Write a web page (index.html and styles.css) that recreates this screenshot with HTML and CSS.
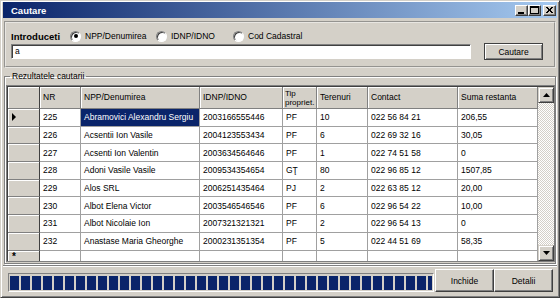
FILE: index.html
```html
<!DOCTYPE html>
<html lang="ro">
<head>
  <meta charset="UTF-8">
  <title>Cautare</title>
  <link rel="stylesheet" href="styles.css">
</head>
<body>
  <div class="window">
    <div class="titlebar">
      <span class="title">Cautare</span>
      <div class="caption-btns">
        <span class="cap-btn"><svg width="11" height="9" viewBox="0 0 11 9"><rect x="2" y="6" width="6" height="2" fill="#000"/></svg></span>
        <span class="cap-btn"><svg width="11" height="9" viewBox="0 0 11 9"><rect x="1.5" y="0.5" width="8" height="7" fill="none" stroke="#000"/><rect x="1" y="1" width="9" height="1" fill="#000"/></svg></span>
        <span class="cap-btn close"><svg width="11" height="9" viewBox="0 0 11 9"><path d="M2 1 L8 7 M3 1 L9 7 M8 1 L2 7 M9 1 L3 7" stroke="#000" stroke-width="1"/></svg></span>
      </div>
    </div>

    <div class="search-panel">
      <div class="search-options">
        <span class="search-label">Introduceti</span>
        <label class="radio radio-npp"><span class="radio-circle checked"></span>NPP/Denumirea</label>
        <label class="radio radio-idnp"><span class="radio-circle"></span>IDNP/IDNO</label>
        <label class="radio"><span class="radio-circle"></span>Cod Cadastral</label>
      </div>
      <div class="search-row">
        <div class="search-input">a</div>
        <button class="btn btn-default">Cautare</button>
      </div>
    </div>

    <fieldset class="results">
      <legend>Rezultatele cautarii</legend>
      <div class="grid">
        <div class="grid-body">
          <table class="data">
            <thead>
              <tr>
                <th class="rowhead c-rh"></th>
                <th class="c-nr">NR</th>
                <th class="c-name">NPP/Denumirea</th>
                <th class="c-idnp">IDNP/IDNO</th>
                <th class="c-tip">Tip<br>propriet.</th>
                <th class="c-ter">Terenuri</th>
                <th class="c-contact">Contact</th>
                <th class="c-suma">Suma restanta</th>
              </tr>
            </thead>
            <tbody>
              <tr>
                <td class="rowhead"><svg width="5" height="8" viewBox="0 0 5 8"><path d="M0 0 L4 4 L0 8 Z" fill="#000"/></svg></td>
                <td>225</td><td class="selected">Abramovici Alexandru Sergiu</td><td>2003166555446</td><td>PF</td><td>10</td><td>022 56 84 21</td><td>206,55</td>
              </tr>
              <tr>
                <td class="rowhead"></td>
                <td>226</td><td>Acsentii Ion Vasile</td><td>2004123553434</td><td>PF</td><td>6</td><td>022 69 32 16</td><td>30,05</td>
              </tr>
              <tr>
                <td class="rowhead"></td>
                <td>227</td><td>Acsenti Ion Valentin</td><td>2003634564646</td><td>PF</td><td>1</td><td>022 74 51 58</td><td>0</td>
              </tr>
              <tr>
                <td class="rowhead"></td>
                <td>228</td><td>Adoni Vasile Vasile</td><td>2009534354654</td><td>GŢ</td><td>80</td><td>022 96 85 12</td><td>1507,85</td>
              </tr>
              <tr>
                <td class="rowhead"></td>
                <td>229</td><td>Alos SRL</td><td>2006251435464</td><td>PJ</td><td>2</td><td>022 63 85 12</td><td>20,00</td>
              </tr>
              <tr>
                <td class="rowhead"></td>
                <td>230</td><td>Albot Elena Victor</td><td>2003546546546</td><td>PF</td><td>6</td><td>022 96 54 22</td><td>10,00</td>
              </tr>
              <tr>
                <td class="rowhead"></td>
                <td>231</td><td>Albot Nicolaie Ion</td><td>2007321321321</td><td>PF</td><td>2</td><td>022 96 54 13</td><td>0</td>
              </tr>
              <tr>
                <td class="rowhead"></td>
                <td>232</td><td>Anastase Maria Gheorghe</td><td>2000231351354</td><td>PF</td><td>5</td><td>022 44 51 69</td><td>58,35</td>
              </tr>
              <tr class="new-row">
                <td class="rowhead">*</td>
                <td></td><td></td><td></td><td></td><td></td><td></td><td></td>
              </tr>
            </tbody>
          </table>
        </div>
        <div class="scrollbar">
          <span class="scroll-btn"><svg width="7" height="4" viewBox="0 0 7 4"><path d="M3.5 0 L7 4 L0 4 Z" fill="#000"/></svg></span>
          <span class="scroll-track"></span>
          <span class="scroll-btn"><svg width="7" height="4" viewBox="0 0 7 4"><path d="M0 0 L7 0 L3.5 4 Z" fill="#000"/></svg></span>
        </div>
      </div>
    </fieldset>

    <div class="statusbar">
      <div class="progress"><div class="progress-fill"></div></div>
      <button class="btn">Inchide</button>
      <button class="btn">Detalii</button>
    </div>
  </div>
</body>
</html>
```

FILE: styles.css
```css
body {
  margin: 0;
  font-family: "Liberation Sans", Arial, sans-serif;
  font-size: 8.5px;
  color: #000;
  background-color: #d4d0c8;
}
.window {
  width: 560px;
  height: 298px;
  box-sizing: border-box;
  background-color: #d4d0c8;
  border: 1px solid;
  border-color: #d4d0c8 #404040 #404040 #d4d0c8;
  box-shadow: inset 1px 1px 0 #fff, inset -1px -1px 0 #808080;
  padding: 1px 2px 2px 2px;
  display: flex;
  flex-direction: column;
}
.titlebar {
  height: 16px;
  flex: none;
  display: flex;
  align-items: center;
  justify-content: space-between;
  padding: 0 1px 0 8px;
  background: linear-gradient(to right, #0a246a, #a6caf0);
  color: #fff;
}
.title {
  font-weight: bold;
  font-size: 9.5px;
}
.caption-btns {
  display: flex;
  align-items: center;
}
.cap-btn {
  width: 13px;
  height: 11px;
  box-sizing: border-box;
  display: flex;
  align-items: center;
  justify-content: center;
  background-color: #d4d0c8;
  border: 1px solid;
  border-color: #fff #404040 #404040 #fff;
  box-shadow: inset -1px -1px 0 #808080;
}
.cap-btn.close {
  margin-left: 2px;
}
.search-panel {
  flex: none;
  height: 47px;
  box-sizing: border-box;
  margin: 3px 1px 0 1px;
  border: 2px groove #e8e6e2;
  padding: 7px 8px 0 5px;
}
.search-options {
  display: flex;
  align-items: center;
  height: 12px;
}
.search-label {
  width: 59px;
  font-weight: bold;
  font-size: 9.5px;
}
.radio {
  display: flex;
  align-items: center;
  gap: 4px;
}
.radio-npp {
  width: 86px;
}
.radio-idnp {
  width: 77px;
}
.radio-circle {
  width: 11px;
  height: 11px;
  box-sizing: border-box;
  border-radius: 50%;
  background-color: #fff;
  border: 1px solid;
  border-color: #808080 #fff #fff #808080;
  box-shadow: inset 1px 1px 0 #404040;
  display: flex;
  align-items: center;
  justify-content: center;
}
.radio-circle.checked::after {
  content: "";
  width: 4px;
  height: 4px;
  border-radius: 50%;
  background-color: #000;
}
.search-row {
  display: flex;
  align-items: center;
  gap: 13px;
  margin-top: 1px;
  height: 17px;
}
.search-input {
  width: 460px;
  height: 15px;
  box-sizing: border-box;
  background-color: #fff;
  border: 1px solid;
  border-color: #808080 #fff #fff #808080;
  box-shadow: inset 1px 1px 0 #404040;
  padding: 0 3px;
  line-height: 13px;
}
.btn {
  font-family: "Liberation Sans", Arial, sans-serif;
  font-size: 8.5px;
  color: #000;
  background-color: #d4d0c8;
  border: 1px solid;
  border-color: #fff #404040 #404040 #fff;
  box-shadow: inset -1px -1px 0 #808080;
  padding: 0;
  width: 59px;
  height: 23px;
}
.btn-default {
  height: 17px;
  border: 1px solid #404040;
  box-shadow: inset 1px 1px 0 #fff, inset -1px -1px 0 #808080;
}
.results {
  flex: none;
  margin: 2px 1px 0 1px;
  padding: 3px 0 1px 1px;
  border: 1px solid #808080;
  box-shadow: inset 1px 1px 0 #fff, 1px 1px 0 #fff;
  min-inline-size: 0;
}
.results legend {
  padding: 0 2px;
  margin-left: 4px;
  line-height: 12px;
}
.grid {
  height: 177px;
  box-sizing: border-box;
  display: flex;
  border: 1px solid #808080;
  box-shadow: inset 1px 1px 0 #404040;
  padding: 1px 0 0 1px;
  overflow: hidden;
}
.grid-body {
  width: 530px;
  overflow: hidden;
  background-color: #fff;
}
.data {
  border-collapse: separate;
  border-spacing: 0;
  table-layout: fixed;
  width: 530px;
}
.data th,
.data td {
  box-sizing: border-box;
  padding: 0 0 0 3px;
  text-align: left;
  font-weight: normal;
  white-space: nowrap;
  overflow: hidden;
  border-right: 1px solid #a0a0a0;
  border-bottom: 1px solid #a0a0a0;
}
.data th {
  height: 22px;
  background-color: #d4d0c8;
  border-right-color: #808080;
  border-bottom-color: #808080;
  box-shadow: inset 1px 1px 0 #fff;
  line-height: 9px;
}
.data th.c-tip {
  font-size: 8px;
  padding-left: 2px;
}
.data td {
  height: 17.7px;
  line-height: 12px;
}
.data .rowhead {
  background-color: #d4d0c8;
  border-right: 1px solid #404040;
  border-bottom-color: #808080;
  box-shadow: inset 1px 1px 0 #fff;
  padding-left: 4px;
}
.data .rowhead svg {
  display: block;
}
.data .new-row td {
  height: 10px;
  border-bottom: none;
  line-height: 10px;
  vertical-align: top;
  padding-top: 1px;
}
.data .new-row .rowhead {
  font-size: 10px;
  font-weight: bold;
}
.c-rh { width: 32px; }
.c-nr { width: 41px; }
.c-name { width: 119px; }
.c-idnp { width: 83px; }
.c-tip { width: 34px; }
.c-ter { width: 51px; }
.c-contact { width: 90px; }
.c-suma { width: 80px; }
.data td.selected {
  background-color: #0a246a;
  color: #fff;
}
.scrollbar {
  width: 16px;
  display: flex;
  flex-direction: column;
}
.scroll-btn {
  flex: none;
  height: 16px;
  box-sizing: border-box;
  display: flex;
  align-items: center;
  justify-content: center;
  background-color: #d4d0c8;
  border: 1px solid;
  border-color: #d4d0c8 #404040 #404040 #d4d0c8;
  box-shadow: inset 1px 1px 0 #fff, inset -1px -1px 0 #808080;
}
.scroll-track {
  flex: 1;
  background: repeating-conic-gradient(#d4d0c8 0 25%, #fff 0 50%) 0 0 / 2px 2px;
}
.statusbar {
  flex: none;
  height: 30px;
  margin-top: 1px;
  box-sizing: border-box;
  display: flex;
  align-items: center;
  padding: 0 4px 0 5px;
  border-top: 1px solid #808080;
  box-shadow: inset 0 1px 0 #fff;
}
.progress {
  flex: 1;
  height: 19px;
  box-sizing: border-box;
  border: 1px solid;
  border-color: #808080 #fff #fff #808080;
  padding: 2px 1px 1px 1px;
  margin: 4px 1px 0 0;
}
.progress-fill {
  height: 100%;
  background: repeating-linear-gradient(to right, #0a246a 0 9px, transparent 9px 11px);
}
```
